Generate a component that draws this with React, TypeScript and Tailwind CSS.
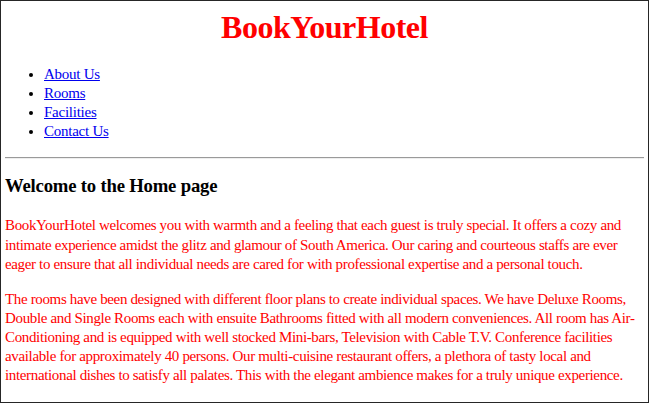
export default function App() {
  const links = ["About Us", "Rooms", "Facilities", "Contact Us"];

  return (
    <div className="h-[404px] w-[650px] bg-white">
      <div className="h-[403px] w-[649px] border border-[#262626] pl-[4px] pr-[4px] pt-[8px] font-['Liberation_Serif','Times_New_Roman',serif] text-black">
        <h1 className="text-center text-[32px] font-bold leading-[37px] tracking-[-0.5px] text-[#ff0000]">
          BookYourHotel
        </h1>

        <ul className="mt-[19px] list-disc pl-[39px] text-[15px] leading-[19px] tracking-[-0.25px]">
          {links.map((label) => (
            <li key={label}>
              <a href="#" className="text-[#0000ee] underline">
                {label}
              </a>
            </li>
          ))}
        </ul>

        <hr className="mt-[16px] border-t border-b border-t-[#9a9a9a] border-b-[#eeeeee]" />

        <h3 className="mt-[16px] text-[18.72px] font-bold leading-[22px] tracking-[-0.2px]">
          Welcome to the Home page
        </h3>

        <p className="mt-[19px] whitespace-nowrap text-[15px] leading-[19.5px] tracking-[-0.35px] text-[#ff0000]">
          BookYourHotel welcomes you with warmth and a feeling that each guest is truly special. It offers a cozy and
          <br />
          intimate experience amidst the glitz and glamour of South America. Our caring and courteous staffs are ever
          <br />
          eager to ensure that all individual needs are cared for with professional expertise and a personal touch.
        </p>

        <p className="mt-[15px] whitespace-nowrap text-[15px] leading-[19px] tracking-[-0.35px] text-[#ff0000]">
          The rooms have been designed with different floor plans to create individual spaces. We have Deluxe Rooms,
          <br />
          Double and Single Rooms each with ensuite Bathrooms fitted with all modern conveniences. All room has Air-
          <br />
          Conditioning and is equipped with well stocked Mini-bars, Television with Cable T.V. Conference facilities
          <br />
          available for approximately 40 persons. Our multi-cuisine restaurant offers, a plethora of tasty local and
          <br />
          international dishes to satisfy all palates. This with the elegant ambience makes for a truly unique experience.
        </p>
      </div>
    </div>
  );
}
